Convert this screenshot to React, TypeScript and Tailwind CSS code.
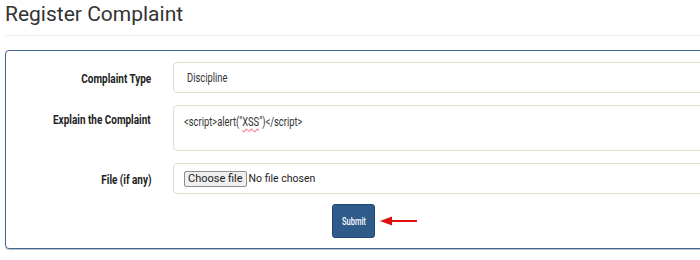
import React from "react";

const lbl = "inline-block text-[12px] font-bold text-[#222] font-['Roboto',sans-serif] scale-x-[0.83] origin-right whitespace-nowrap";
const val = "inline-block text-[12px] text-[#333] font-['Roboto',sans-serif] scale-x-[0.78] origin-left whitespace-nowrap";

export default function App() {
  return (
    <div className="w-[700px] h-[260px] overflow-hidden bg-white font-['Roboto',sans-serif]">
      <div className="pl-[5px] w-[740px]">
        <h1 className="text-[21px] leading-[26px] pt-[1px] text-[#333]">Register Complaint</h1>
        <div className="mt-[8px] h-px bg-[#eeeeee]" />
        <div className="mt-[14px] h-[199px] border border-[#3f6592] rounded-[4px] shadow-[0_1px_1px_rgba(0,0,0,0.25)] pt-[11px]">
          <div className="flex flex-col gap-[12px]">
            <div className="flex items-center">
              <div className="w-[145px] text-right"><span className={lbl}>Complaint Type</span></div>
              <div className="ml-[22px] h-[31px] flex-1 border border-[#e4ddd0] rounded-[4px] flex items-center pl-[13px]"><span className={val}>Discipline</span></div>
            </div>
            <div className="flex items-start">
              <div className="w-[145px] text-right pt-[5px] leading-[18px]"><span className={lbl}>Explain the Complaint</span></div>
              <div className="ml-[22px] h-[46px] flex-1 border border-[#e4ddd0] rounded-[4px] pl-[10px] pt-[6px] leading-[18px]">
                <span className={val}>
                  &lt;script&gt;alert("<span className="underline decoration-wavy decoration-red-500 decoration-[1px] underline-offset-2">XSS</span>")&lt;/script&gt;
                </span>
              </div>
            </div>
            <div className="flex items-center">
              <div className="w-[145px] text-right"><span className={lbl}>File (if any)</span></div>
              <div className="ml-[22px] h-[31px] flex-1 border border-[#e4ddd0] rounded-[4px] flex items-center pl-[10px] text-[#222] font-['Roboto',sans-serif]">
                <span className="h-[16px] px-[3px] flex items-center border border-[#8f8f8f] rounded-[2px] bg-[#efefef] text-[11px] leading-none">Choose file</span>
                <span className="ml-[2px] text-[10.5px]">No file chosen</span>
              </div>
            </div>
          </div>
          <div className="flex items-center mt-[10px] pl-[326px]">
            <button className="w-[43px] h-[34px] bg-[#2f5b8a] border border-[#1f4670] rounded-[3px] text-white flex items-center justify-center">
              <span className="inline-block text-[10px] font-medium font-['Roboto',sans-serif] scale-x-[0.75]">Submit</span>
            </button>
            <svg width="40" height="12" viewBox="0 0 40 12" className="ml-[3px]">
              <line x1="10" y1="6" x2="39" y2="6" stroke="#e01010" strokeWidth="2" />
              <polygon points="2,6 14,1.5 14,10.5" fill="#e01010" />
            </svg>
          </div>
        </div>
      </div>
    </div>
  );
}
